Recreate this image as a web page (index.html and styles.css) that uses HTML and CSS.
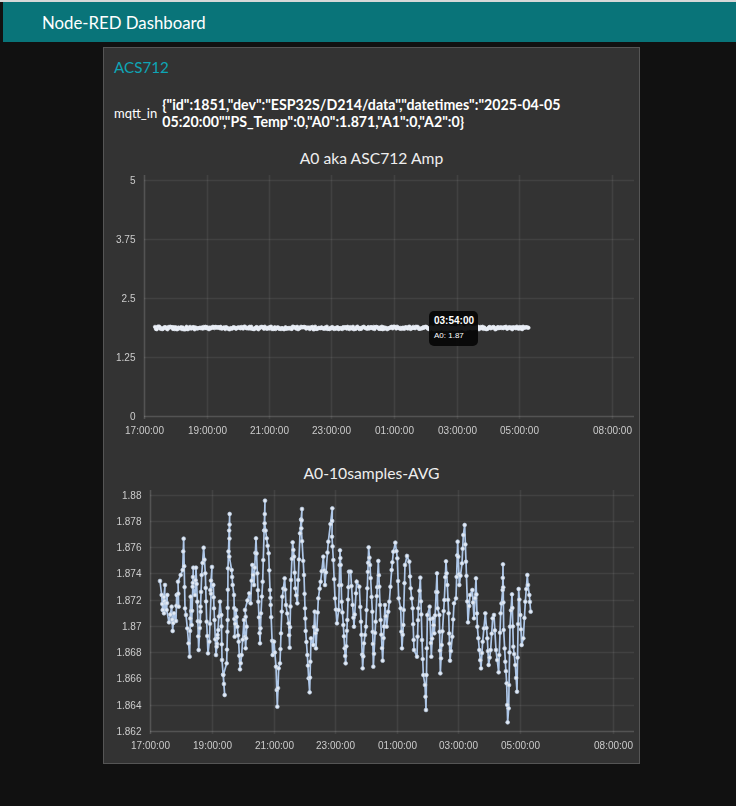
FILE: index.html
```html
<!DOCTYPE html>
<html lang="en">
<head>
<meta charset="utf-8">
<title>Node-RED Dashboard</title>
<link rel="stylesheet" href="styles.css">
</head>
<body>
<div class="edge">
  <header class="toolbar">Node-RED Dashboard</header>
  <main class="content">
    <section class="card">
      <h2 class="card-title">ACS712</h2>
      <div class="message">
        <span class="message-label">mqtt_in</span>
        <span class="message-value">{"id":1851,"dev":"ESP32S/D214/data","datetimes":"2025-04-05 05:20:00","PS_Temp":0,"A0":1.871,"A1":0,"A2":0}</span>
      </div>
      <h3 class="chart-title first">A0 aka ASC712 Amp</h3>
      <div class="chart">
        <svg id="chart-a" class="plot" width="535" height="278" viewBox="0 0 535 278"></svg>
        <div class="tooltip">
          <div class="tooltip-time">03:54:00</div>
          <div class="tooltip-value">A0: 1.87</div>
        </div>
      </div>
      <h3 class="chart-title second">A0-10samples-AVG</h3>
      <div class="chart">
        <svg id="chart-b" class="plot" width="535" height="272" viewBox="0 0 535 272"></svg>
      </div>
    </section>
  </main>
</div>
<script src="chart.js"></script>
</body>
</html>
```
FILE: styles.css
```css
* { box-sizing: border-box; }
html, body { margin: 0; height: 100%; }
body {
  background: #111;
  color: #fff;
  font-family: Lato, "Open Sans", sans-serif;
  overflow: hidden;
}
.edge {
  border-top: 2px solid #d6d8d8;
  padding-left: 3px;
  height: 100%;
}
.toolbar {
  height: 40px;
  padding-left: 39px;
  background: #097479;
  font-size: 16.8px;
  line-height: 42px;
}
.content { padding: 5px 0 0 100px; }
.card {
  width: 537px;
  height: 717px;
  background: #333;
  border: 1px solid #555;
}
.card-title {
  margin: 0;
  padding: 8px 0 0 10px;
  color: #0ea5b5;
  font-size: 15.2px;
  font-weight: 400;
  line-height: 22px;
}
.message {
  display: flex;
  align-items: center;
  gap: 5px;
  margin: 18px 0 0;
  padding: 0 10px;
  font-size: 13px;
  line-height: 17px;
}
.message-value { font-size: 14.2px; font-weight: 700; width: 410px; }
.chart-title {
  margin: 0;
  font-size: 15.7px;
  font-weight: 400;
  line-height: 20px;
  text-align: center;
  color: #eee;
}
.chart-title.first { margin-top: 18px; }
.chart-title.second { margin-top: 17px; }
.chart { position: relative; }
.plot { display: block; filter: blur(0.3px); }
.tick { fill: #ccc; font: 10px "Liberation Sans", Arial, sans-serif; }
.grid { stroke: #fff; stroke-opacity: 0.07; stroke-width: 1.6; }
.axis { stroke: #fff; stroke-opacity: 0.16; stroke-width: 1.6; }
.tooltip {
  position: absolute;
  left: 325px;
  top: 143px;
  width: 49px;
  height: 35px;
  padding: 4px 5px;
  background: rgba(6, 6, 6, 0.93);
  border-radius: 5px;
  font-family: "Liberation Sans", Arial, sans-serif;
  color: #fff;
}
.tooltip-time { font-size: 10px; font-weight: 700; line-height: 12px; }
.tooltip-value { font-size: 8px; line-height: 10px; margin-top: 4px; }
```
FILE: chart.js
```js
var NS = "http://www.w3.org/2000/svg";
function el(parent, name, attrs, text) {
  var n = document.createElementNS(NS, name);
  for (var k in attrs) n.setAttribute(k, attrs[k]);
  if (text) n.textContent = text;
  parent.appendChild(n);
  return n;
}
var seed = 12345;
function rnd() {
  seed = (seed * 16807) % 2147483647;
  return seed / 2147483647;
}
var TIMES = ["17:00:00","19:00:00","21:00:00","23:00:00","01:00:00","03:00:00","05:00:00","08:00:00"];
function axes(svg, o) {
  var r = svg.getBoundingClientRect();
  o.ys.forEach(function (t, i) {
    var y = t[1] + .5 - r.top;
    el(svg, "line", { x1: o.x0 - r.left, x2: o.right - r.left, y1: y, y2: y, "class": i === o.ys.length - 1 ? "axis" : "grid" });
    el(svg, "text", { x: o.x0 - 8.5 - r.left, y: t[1] + 4 - r.top, "text-anchor": "end", "class": "tick" }, t[0]);
  });
  o.xs.forEach(function (x, i) {
    el(svg, "line", { x1: x + .5 - r.left, x2: x + .5 - r.left, y1: o.top - r.top, y2: o.bottom + 3 - r.top, "class": i === 0 ? "axis" : "grid" });
    el(svg, "text", { x: x + .5 - r.left, y: o.bottom + 18 - r.top, "text-anchor": "middle", "class": "tick" }, TIMES[i]);
  });
}
function plot(svg, pts, width, radius, fill, edge) {
  var r = svg.getBoundingClientRect();
  var local = pts.map(function (p) { return [p[0] - r.left, p[1] - r.top]; });
  el(svg, "polyline", { points: local.map(String).join(" "), fill: "none", stroke: "#aec7e8", "stroke-width": width });
  local.forEach(function (p) {
    el(svg, "circle", { cx: p[0], cy: p[1], r: radius, fill: fill, stroke: edge, "stroke-width": 0.7 });
  });
}

var A = document.getElementById("chart-a");
axes(A, {
  x0: 144, right: 634, top: 175, bottom: 416,
  ys: [["5",180],["3.75",239],["2.5",298],["1.25",357],["0",416]],
  xs: [144, 207, 269, 331, 394, 457, 519, 612]
});
var linePts = [];
for (var x = 155; x <= 529; x += 0.9) {
  linePts.push([x, 328 + (rnd() - 0.5) * 2.8]);
}
plot(A, linePts, 1, 1.7, "#f0f3f8", "#e4eaf3");

var B = document.getElementById("chart-b");
axes(B, {
  x0: 150, right: 634, top: 490, bottom: 731,
  ys: [["1.88",495],["1.878",521],["1.876",547],["1.874",573],["1.872",600],["1.87",626],["1.868",652],["1.866",678],["1.864",705],["1.862",731]],
  xs: [150, 212, 274, 335, 397, 458, 520, 613]
});

/* sampled series, first half: x = 150 + X/3, y = 495 + Y/3 */
var partOne = [[30,258],[35,300],[38,345],[45,270],[42,355],[52,300],[50,345],[57,382],[65,335],[68,408],[72,355],[78,378],[80,300],[86,335],[84,260],[92,240],[98,225],[101,131],[105,340],[108,360],[112,400],[119,485],[122,305],[125,390],[130,218],[128,275],[135,300],[138,218],[142,320],[146,465],[152,350],[150,380],[155,240],[161,158],[166,235],[170,380],[174,475],[178,440],[186,216],[181,285],[190,270],[192,340],[198,480],[205,405],[200,455],[210,320],[214,360],[216,495],[224,600],[220,540],[230,505],[233,375],[234,220],[239,57],[238,185],[245,225],[248,270],[252,300],[254,425],[258,345],[262,395],[266,440],[270,523],[275,480],[282,375],[287,460],[290,395],[285,345],[298,295],[302,325],[307,210],[312,270],[318,130],[322,235],[325,320],[330,445],[333,355],[338,260],[345,17],[344,85],[350,130],[356,175],[360,285],[362,330],[368,480],[372,440],[378,515],[382,635],[386,520],[390,505],[393,415],[397,305],[404,250],[408,330],[416,385],[419,458],[423,255],[428,142],[432,185],[436,280],[442,325],[450,115],[456,42],[454,100],[462,240],[465,340],[467,408],[472,480],[476,550],[479,592],[483,430],[490,450],[494,350],[498,460],[505,310],[512,260],[520,185],[525,270],[535,140],[547,40],[546,125],[550,195],[555,310],[561,385],[566,345],[570,166],[572,210],[575,320],[580,390],[584,460],[587,505],[592,375],[597,230]];
/* second half: x = 340 + X/3, y = 495 + Y/3 */
var partTwo = [[32,230],[38,330],[42,395],[50,260],[58,275],[63,380],[68,520],[72,445],[78,395],[82,280],[86,157],[90,210],[97,350],[100,515],[107,380],[115,198],[118,275],[122,375],[128,497],[135,330],[140,395],[148,320],[155,225],[160,170],[166,143],[172,190],[176,310],[182,340],[186,460],[190,390],[195,210],[201,183],[208,200],[212,280],[218,340],[222,465],[231,485],[235,340],[241,248],[246,435],[250,540],[255,570],[258,645],[262,360],[269,335],[274,485],[279,370],[283,415],[291,235],[293,340],[298,360],[301,535],[305,450],[313,315],[318,199],[322,270],[326,355],[330,497],[337,425],[342,325],[348,310],[353,140],[358,270],[366,205],[370,120],[374,90],[378,200],[384,382],[390,300],[397,285],[402,370],[408,250],[412,395],[418,465],[423,520],[428,440],[436,355],[442,430],[446,510],[452,465],[458,370],[462,360],[468,465],[476,532],[482,355],[488,285],[489,208],[491,405],[496,500],[500,565],[503,682],[506,640],[510,395],[516,298],[520,455],[526,510],[531,590],[536,282],[541,360],[545,450],[550,430],[556,320],[562,240],[564,270],[568,300],[572,350]];
var traced = partOne.map(function (p) { return [150 + p[0] / 3, 495 + p[1] / 3]; })
  .concat(partTwo.map(function (p) { return [340 + p[0] / 3, 495 + p[1] / 3]; }));
var pts = [];
traced.forEach(function (p, i) {
  pts.push(p);
  var q = traced[i + 1];
  if (!q) return;
  var span = Math.abs(q[1] - p[1]);
  var extra = span > 40 ? 2 : span > 14 ? 1 : 0;
  for (var j = 1; j <= extra; j++) {
    var t = j / (extra + 1) + (rnd() - 0.5) * 0.2;
    pts.push([p[0] + (q[0] - p[0]) * t, p[1] + (q[1] - p[1]) * t]);
  }
});
plot(B, pts, 1.7, 1.9, "#e3eaf4", "#b9cbe3");
```
